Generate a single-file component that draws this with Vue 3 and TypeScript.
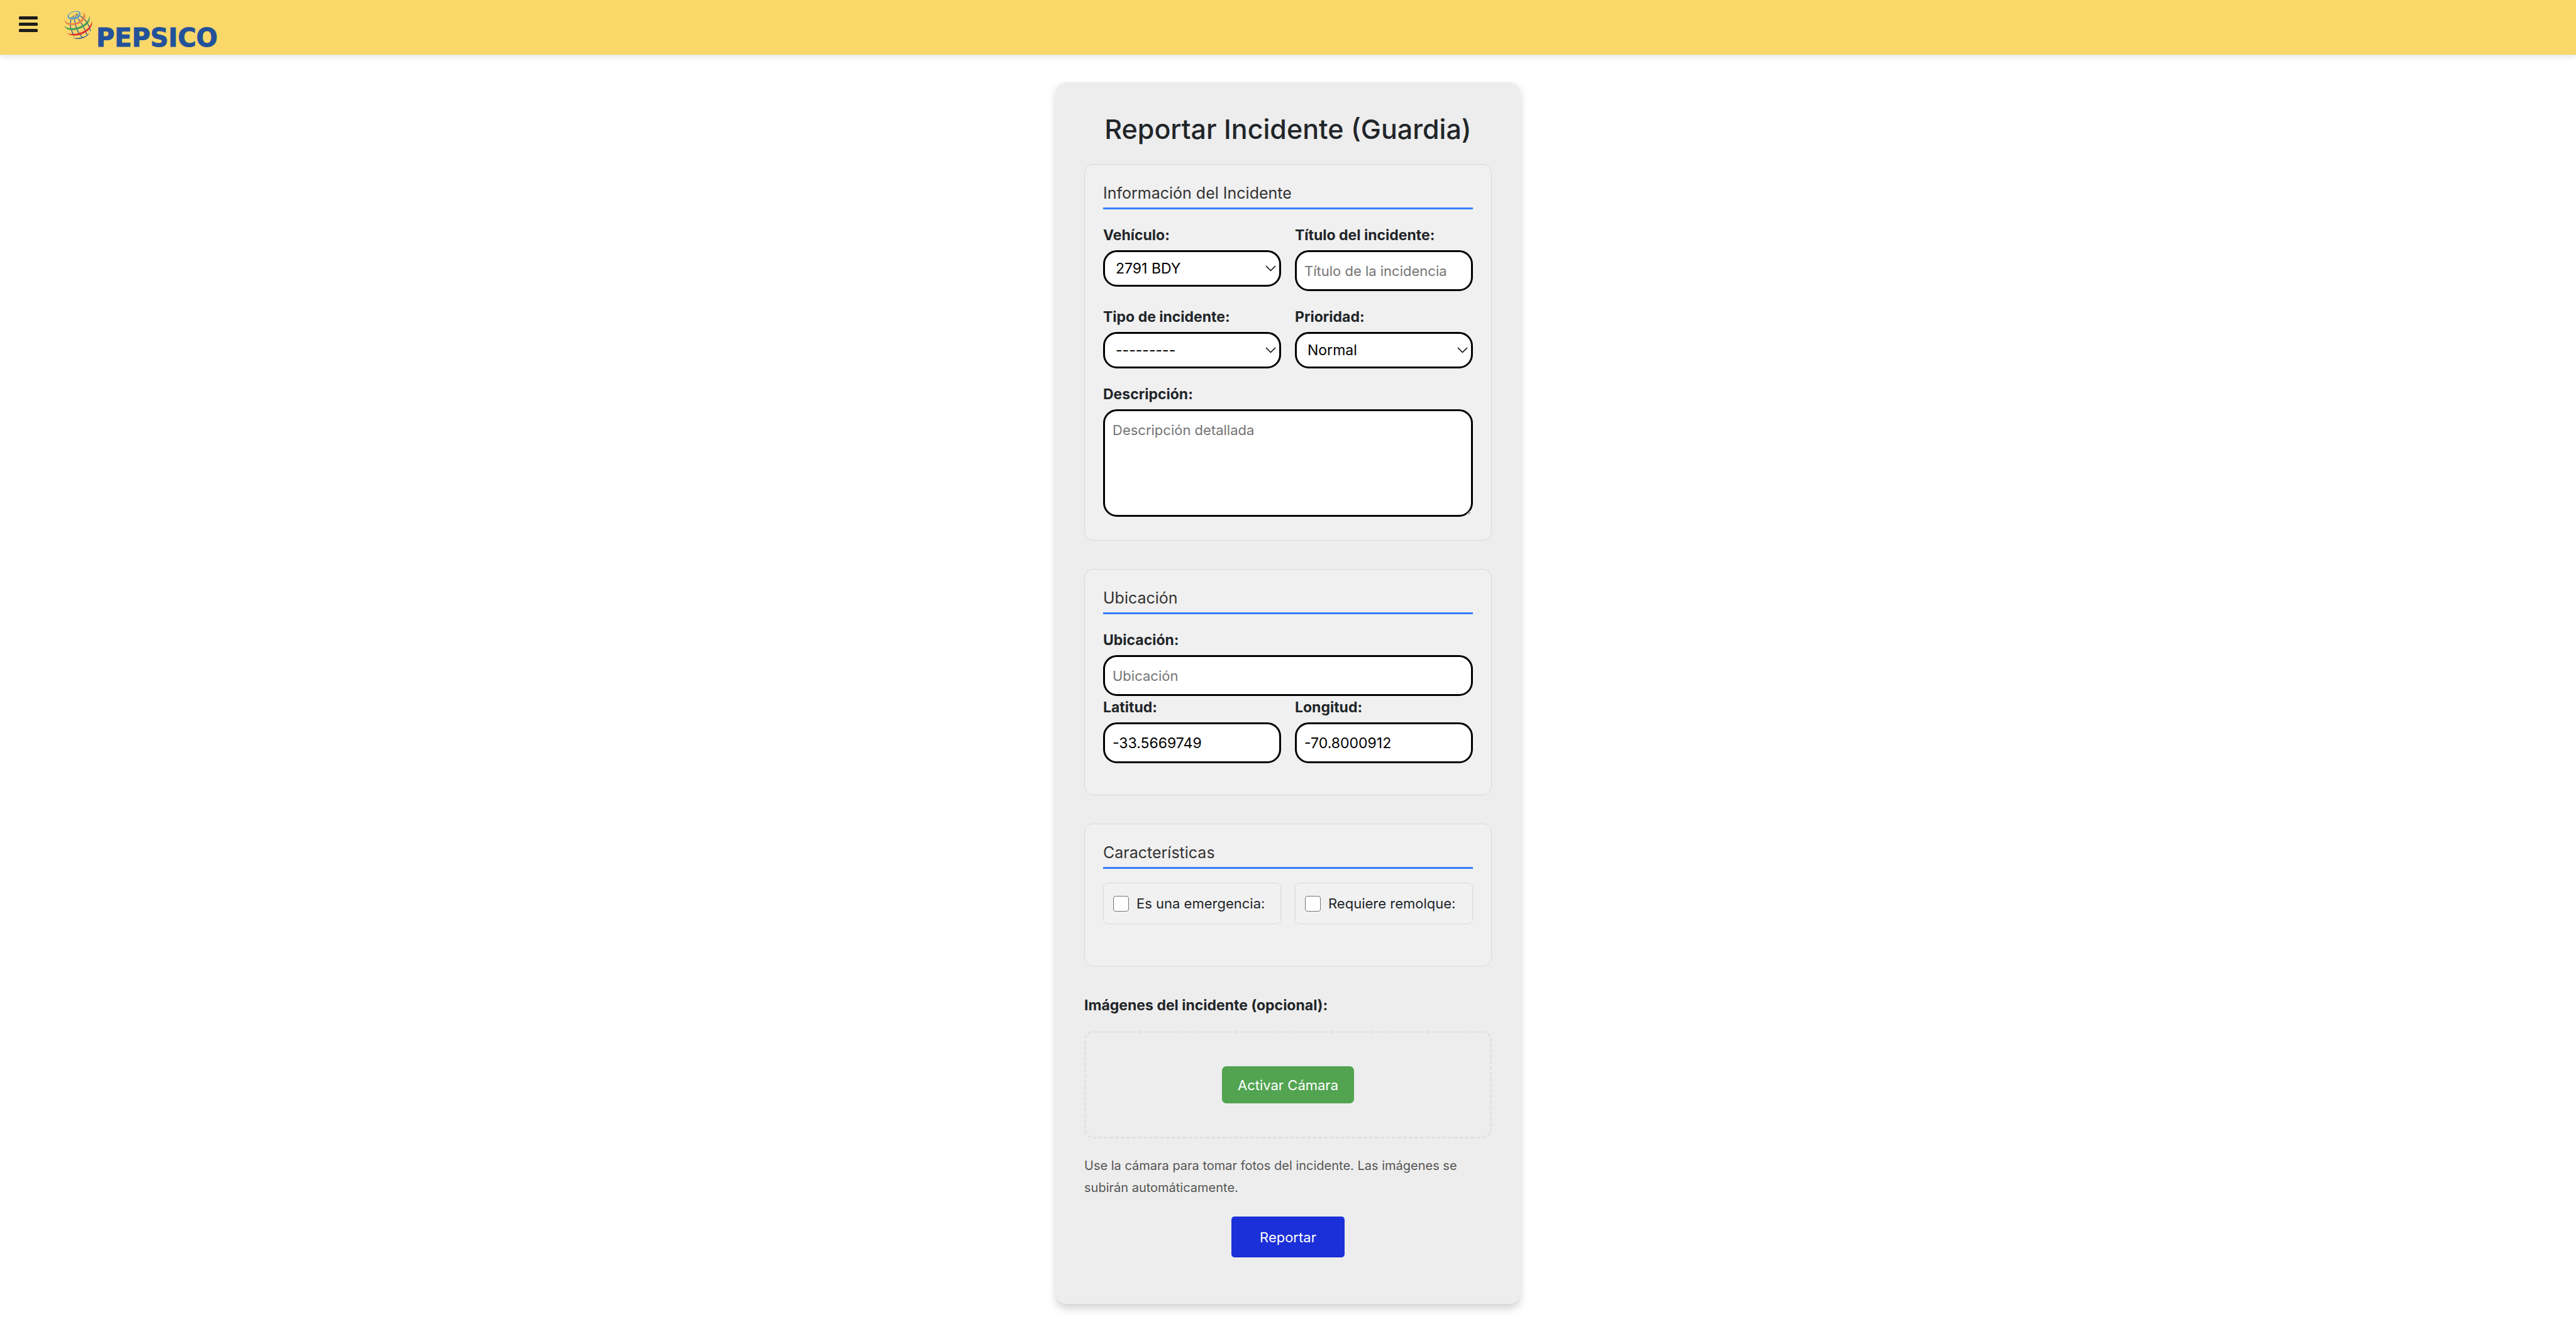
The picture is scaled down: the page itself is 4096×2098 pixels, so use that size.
<script setup lang="ts">
import { ref } from 'vue'

const vehicle = ref('2791 BDY')
const title = ref('')
const kind = ref('')
const priority = ref('Normal')
const description = ref('')
const place = ref('')
const latitude = ref('-33.5669749')
const longitude = ref('-70.8000912')
const emergency = ref(false)
const towing = ref(false)
</script>

<template>
  <div class="page">
    <header class="topbar">
      <button class="menu" type="button" aria-label="Menú">
        <svg viewBox="0 0 30 26" width="30" height="26" aria-hidden="true">
          <rect x="0" y="0" width="30" height="5" rx="1.5" />
          <rect x="0" y="10" width="30" height="5" rx="1.5" />
          <rect x="0" y="20" width="30" height="5" rx="1.5" />
        </svg>
      </button>
      <a class="brand" href="#">
        <svg class="globe" viewBox="33 26 146 146" aria-hidden="true">
          <g fill="none" stroke="#24529a" stroke-width="4">
            <path d="M68 70C61 98 67 128 85 156" />
            <path d="M86 70C90 104 104 142 128 166" />
            <path d="M104 66C122 88 140 122 152 152" />
            <path d="M118 54C144 70 164 100 169 132" />
            <path d="M84 51L67 63M85 52L77 66M89 52L90 66M92 50L102 61M93 47L112 54M92 45L108 44" stroke-width="2.5" />
          </g>
          <path d="M78 167C106 178 148 170 167 136C148 162 114 169 78 167Z" fill="#24529a" />
          <path fill-rule="evenodd" d="M51 58C50 40 78 27 98 28C116 29 122 42 114 54C104 72 52 78 51 58ZM56 56C58 69 98 64 109 50C115 40 108 32 96 31C78 30 54 42 56 56Z" fill="#3c95d8" />
          <path d="M37 75C32 102 80 106 109 93C142 78 152 51 131 34C138 54 128 73 104 84C80 95 45 96 37 75Z" fill="#e6824a" />
          <path d="M34 105C46 135 95 130 126 114C156 98 171 75 163 51C163 74 147 91 121 105C92 119 52 123 34 105Z" fill="#459c58" />
          <path d="M46 141C70 161 112 156 140 140C168 123 181 101 176 80C173 100 157 119 133 132C108 145 72 151 46 141Z" fill="#dc3535" />
        </svg>
        <span class="wordmark">PEPSICO</span>
      </a>
    </header>

    <main class="content">
      <form class="card" @submit.prevent>
        <h1>Reportar Incidente (Guardia)</h1>

        <section class="panel panel-info">
          <h2>Información del Incidente</h2>
          <div class="grid">
            <div class="field">
              <label for="vehicle">Vehículo:</label>
              <div class="picker">
                <select id="vehicle" v-model="vehicle">
                  <option>2791 BDY</option>
                </select>
                <svg viewBox="0 0 17 10" aria-hidden="true"><path d="M1 1l7.500 7.500L16 1" /></svg>
              </div>
            </div>
            <div class="field">
              <label for="title">Título del incidente:</label>
              <input id="title" v-model="title" class="box" type="text" placeholder="Título de la incidencia" />
            </div>
            <div class="field">
              <label for="kind">Tipo de incidente:</label>
              <div class="picker">
                <select id="kind" v-model="kind">
                  <option value="">---------</option>
                </select>
                <svg viewBox="0 0 17 10" aria-hidden="true"><path d="M1 1l7.500 7.500L16 1" /></svg>
              </div>
            </div>
            <div class="field">
              <label for="priority">Prioridad:</label>
              <div class="picker">
                <select id="priority" v-model="priority">
                  <option>Normal</option>
                </select>
                <svg viewBox="0 0 17 10" aria-hidden="true"><path d="M1 1l7.500 7.500L16 1" /></svg>
              </div>
            </div>
            <div class="field wide">
              <label for="description">Descripción:</label>
              <textarea id="description" v-model="description" class="box" placeholder="Descripción detallada"></textarea>
            </div>
          </div>
        </section>

        <section class="panel panel-place">
          <h2>Ubicación</h2>
          <div class="grid tight">
            <div class="field wide">
              <label for="place">Ubicación:</label>
              <input id="place" v-model="place" class="box" type="text" placeholder="Ubicación" />
            </div>
            <div class="field">
              <label for="latitude">Latitud:</label>
              <input id="latitude" v-model="latitude" class="box" type="text" />
            </div>
            <div class="field">
              <label for="longitude">Longitud:</label>
              <input id="longitude" v-model="longitude" class="box" type="text" />
            </div>
          </div>
        </section>

        <section class="panel panel-traits">
          <h2>Características</h2>
          <div class="grid">
            <label class="check"><input v-model="emergency" type="checkbox" />Es una emergencia:</label>
            <label class="check"><input v-model="towing" type="checkbox" />Requiere remolque:</label>
          </div>
        </section>

        <h3 id="images">Imágenes del incidente (opcional):</h3>
        <div class="camera" role="group" aria-labelledby="images">
          <button class="btn btn-camera" type="button">Activar Cámara</button>
        </div>
        <p class="help">Use la cámara para tomar fotos del incidente. Las imágenes se subirán automáticamente.</p>
        <button class="btn btn-submit" type="submit">Reportar</button>
      </form>
    </main>
  </div>
</template>

<style>
body {
  margin: 0;
  background: #fff;
}
</style>

<style scoped>
.page,
.page * {
  box-sizing: border-box;
}

.page {
  min-height: 100vh;
  font-family: Inter, 'Liberation Sans', sans-serif;
  color: #212529;
}

.topbar {
  display: flex;
  align-items: flex-start;
  gap: 42px;
  height: 87px;
  padding: 17px 30px 0;
  background: #f9d769;
  box-shadow: 0 4px 8px rgba(0, 0, 0, 0.1);
}

.menu {
  display: flex;
  margin: 9px 0 0;
  padding: 0;
  border: 0;
  background: none;
  fill: #1c1c1c;
}

.brand {
  display: flex;
  align-items: flex-end;
  gap: 6px;
  height: 62px;
  text-decoration: none;
}

.globe {
  align-self: flex-start;
  width: 45px;
  height: 45px;
}

.wordmark {
  font: 700 40px/38px 'DejaVu Sans', sans-serif;
  color: #24529a;
  -webkit-text-stroke: 1px #24529a;
}

.content {
  padding: 44px 16px 0;
}

.card {
  display: flex;
  flex-direction: column;
  max-width: 738px;
  margin: 0 auto;
  padding: 45px 45px 74px;
  border-radius: 16px;
  background: #ededed;
  box-shadow: 0 7px 14px rgba(0, 0, 0, 0.18);
}

h1 {
  margin: 0 0 27px;
  font-size: 43px;
  font-weight: 500;
  line-height: 58px;
  text-align: center;
}

.panel {
  margin-bottom: 45px;
  padding: 29px;
  border: 1px solid #d9d9d9;
  border-radius: 14px;
  background: #f0f0f0;
}

.panel-info {
  padding-bottom: 37px;
}

.panel-place {
  padding-bottom: 50px;
}

.panel-traits {
  padding-bottom: 66px;
}

h2 {
  margin: 0 0 29px;
  padding-bottom: 7px;
  border-bottom: 3px solid #347df8;
  color: #333;
  font-size: 25px;
  font-weight: 400;
  line-height: 32px;
}

.panel-traits h2 {
  margin-bottom: 22px;
}

.grid {
  display: grid;
  grid-template-columns: 1fr 1fr;
  gap: 29px 22px;
}

.tight {
  row-gap: 6px;
}

.field {
  display: flex;
  flex-direction: column;
  min-width: 0;
}

.wide {
  grid-column: 1 / -1;
}

.field label,
h3 {
  font-size: 23px;
  font-weight: 700;
  line-height: 24px;
}

.field label {
  margin-bottom: 12px;
}

.box,
select {
  width: 100%;
  margin: 0;
  border: 3px solid #000;
  border-radius: 22px;
  outline: none;
  background: #fff;
  color: #000;
  font-family: inherit;
  font-size: 23px;
}

.box {
  height: 65px;
  padding: 0 12px;
}

.box::placeholder {
  color: #757575;
  font-size: 22px;
}

textarea.box {
  display: block;
  height: 171px;
  padding: 16px 12px;
  line-height: 29px;
  resize: vertical;
}

.picker {
  position: relative;
}

.picker svg {
  position: absolute;
  top: 24px;
  right: 8px;
  width: 17px;
  height: 10px;
  fill: none;
  stroke: #000;
  stroke-width: 1.5;
  pointer-events: none;
}

select {
  display: block;
  height: 58px;
  padding: 0 32px 0 17px;
  appearance: none;
}

.check {
  display: flex;
  align-items: center;
  gap: 12px;
  height: 66px;
  padding: 0 15px;
  border: 1px solid #d9d9d9;
  border-radius: 8px;
  background: #f1f1f1;
  font-size: 22px;
  white-space: nowrap;
}

.check input {
  flex: none;
  width: 25px;
  height: 25px;
  margin: 0;
  border: 1px solid #767676;
  border-radius: 4px;
  background: #fff;
  appearance: none;
}

.check input:checked {
  background: #347df8;
}

h3 {
  margin: 5px 0 29px;
}

.camera {
  display: flex;
  align-items: center;
  justify-content: center;
  height: 171px;
  border: 3px dashed #e0e0e6;
  border-radius: 14px;
}

.btn {
  border: 0;
  color: #fff;
  font-family: inherit;
  font-size: 22px;
}

.btn-camera {
  height: 59px;
  padding: 0 25px;
  border-radius: 7px;
  background: #52a451;
}

.help {
  margin: 26px 0 28px;
  color: #555;
  font-size: 20px;
  line-height: 35px;
}

.btn-submit {
  align-self: center;
  height: 65px;
  padding: 0 45px;
  border-radius: 5px;
  background: #1b30d8;
}
</style>
